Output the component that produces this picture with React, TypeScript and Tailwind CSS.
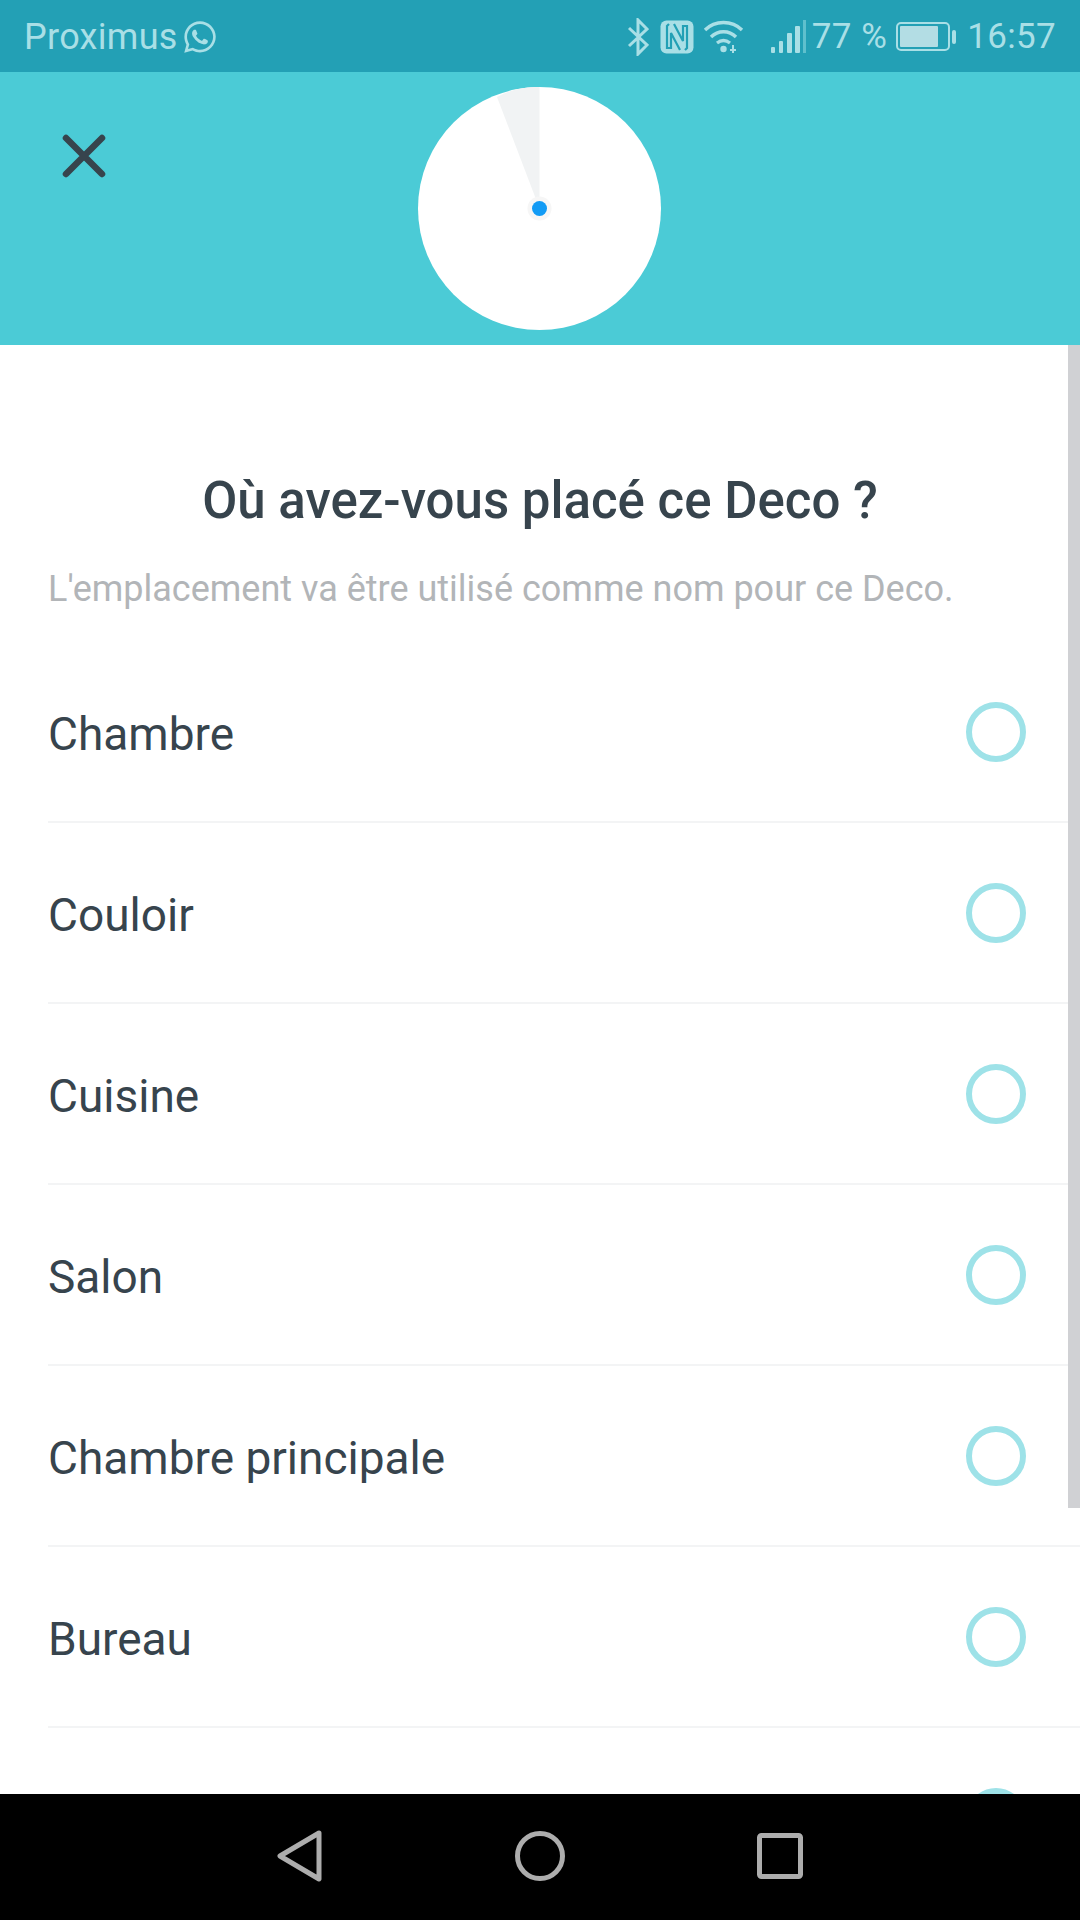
import { FaWhatsapp } from 'react-icons/fa';

// last row is cut off by the nav bar, only the top of its radio shows
const rooms = ['Chambre', 'Couloir', 'Cuisine', 'Salon', 'Chambre principale', 'Bureau', ''];

function StatusIcons() {
  return (
    <div className="flex items-center">
      {/* bluetooth */}
      <svg width="22" height="38" viewBox="0 0 22 38" fill="none" stroke="#a9dfe6" strokeWidth="3" className="mr-[11px]">
        <path d="M2 10 L20 27 L11 36 L11 2 L20 11 L2 28" />
      </svg>
      {/* nfc */}
      <svg width="34" height="34" viewBox="0 0 34 34" className="mr-[9px]">
        <rect x="0.5" y="0.5" width="33" height="33" rx="6" fill="#a9dfe6" />
        <path d="M9 4 L7 6 L7 28 L11 28 L11 13 L20 30 M25 30 L27 28 L27 6 L23 6 L23 21 L14 4" fill="none" stroke="#23a0b5" strokeWidth="2.2" />
      </svg>
      {/* wifi */}
      <svg width="42" height="36" viewBox="0 0 42 36" fill="none" stroke="#a9dfe6" strokeWidth="3.4" className="mr-[26px]">
        <path d="M2 11 C12 1 29 1 39 11" />
        <path d="M8 18 C15 11 26 11 33 18" />
        <path d="M14 24 C18 21 23 21 27 24" />
        <circle cx="20.5" cy="30" r="3.2" fill="#a9dfe6" stroke="none" />
        <path d="M30 26 L30 34 M27 31 L33 31" strokeWidth="2" />
      </svg>
      {/* signal */}
      <svg width="36" height="36" viewBox="0 0 36 36" className="mr-[5px]">
        <rect x="0" y="28" width="4" height="6" rx="1" fill="#a9dfe6" />
        <rect x="8" y="22" width="4" height="12" rx="1" fill="#a9dfe6" />
        <rect x="16" y="14" width="5" height="20" rx="1" fill="#a9dfe6" />
        <rect x="24" y="7" width="5" height="27" rx="1" fill="#a9dfe6" />
        <rect x="32" y="1" width="3" height="33" fill="#5fc0cd" />
      </svg>
      <span className="text-[35px] text-[#a9dfe6] tracking-[0.5px] mr-[9px]">77 %</span>
      {/* battery */}
      <svg width="62" height="30" viewBox="0 0 62 30" className="mr-[9px]">
        <rect x="1" y="1" width="52" height="27" rx="4" fill="none" stroke="#a9dfe6" strokeWidth="2" />
        <rect x="4" y="4" width="38" height="21" rx="1" fill="#b3dde4" />
        <rect x="56" y="8" width="4" height="14" rx="2" fill="#a9dfe6" />
      </svg>
      <span className="text-[35px] text-[#a9dfe6] tracking-[0.3px]">16:57</span>
    </div>
  );
}

export default function App() {
  return (
    <div className="w-[1080px] h-[1920px] flex flex-col bg-white font-['Roboto',sans-serif] overflow-hidden">
      {/* Status bar */}
      <div className="h-[72px] shrink-0 bg-[#23a0b5] flex items-center justify-between pl-[24px] pr-[24px] pt-[2px]">
        <div className="flex items-center">
          <span className="text-[36px] text-[#a9dfe6] tracking-[0.3px]">Proximus</span>
          <FaWhatsapp className="ml-[4px] w-[36px] h-[36px] text-[#a9dfe6]" />
        </div>
        <StatusIcons />
      </div>

      {/* Header */}
      <div className="h-[273px] shrink-0 bg-[#4bcbd6] grid grid-cols-[1fr_243px_1fr]">
        <div className="pl-[61px] pt-[61px]">
          <svg width="46" height="46" viewBox="0 0 46 46" fill="none" stroke="#37444d" strokeWidth="6.5" strokeLinecap="round">
            <path d="M5 5 L41 41 M41 5 L5 41" />
          </svg>
        </div>
        <div className="pt-[15px] -ml-[1px]">
          <svg width="243" height="243" viewBox="0 0 243 243">
            <circle cx="121.5" cy="121.5" r="121.5" fill="#ffffff" />
            <path d="M121.5 121.5 L121.5 0 C104 0 92 3 79 10 Z" fill="#f1f3f4" />
            <circle cx="121.5" cy="121.5" r="12" fill="#f6f6f6" />
            <circle cx="121.5" cy="121.5" r="7.5" fill="#129bf5" />
          </svg>
        </div>
        <div />
      </div>

      {/* Content */}
      <div className="relative flex-1 overflow-hidden bg-white">
        <div className="absolute right-0 top-0 w-[12px] h-[1163px] bg-[#d0d1d4]" />
        <h1 className="mt-[129px] text-center text-[51px] leading-[54px] font-medium text-[#37444d]">
          Où avez-vous placé ce Deco ?
        </h1>
        <p className="mt-[38px] pl-[48px] text-[36px] leading-[46px] text-[#b2b5b8]">
          L'emplacement va être utilisé comme nom pour ce Deco.
        </p>
        <div className="mt-[30px] pl-[48px]">
          {rooms.map((room, i) => (
            <div key={i} className="h-[181px] border-b-2 border-[#f3f4f5] flex items-center justify-between pr-[54px]">
              <span className="text-[46px] text-[#37444d] pt-[6px]">{room}</span>
              <div className="w-[60px] h-[60px] rounded-full border-[6px] border-[#9ee2e8]" />
            </div>
          ))}
        </div>
      </div>

      {/* Nav bar */}
      <div className="h-[126px] shrink-0 bg-black flex items-center pl-[277px] pb-[3px]">
        <svg width="46" height="52" viewBox="0 0 46 52" fill="none" stroke="#adadad" strokeWidth="5" strokeLinejoin="round">
          <path d="M42 3 L3 26 L42 49 Z" />
        </svg>
        <svg width="50" height="50" viewBox="0 0 50 50" fill="none" stroke="#adadad" strokeWidth="5" className="ml-[192px]">
          <circle cx="25" cy="25" r="22.5" />
        </svg>
        <svg width="46" height="46" viewBox="0 0 46 46" fill="none" stroke="#adadad" strokeWidth="5" strokeLinejoin="round" className="ml-[192px]">
          <rect x="2.5" y="2.5" width="41" height="41" rx="2" />
        </svg>
      </div>
    </div>
  );
}
